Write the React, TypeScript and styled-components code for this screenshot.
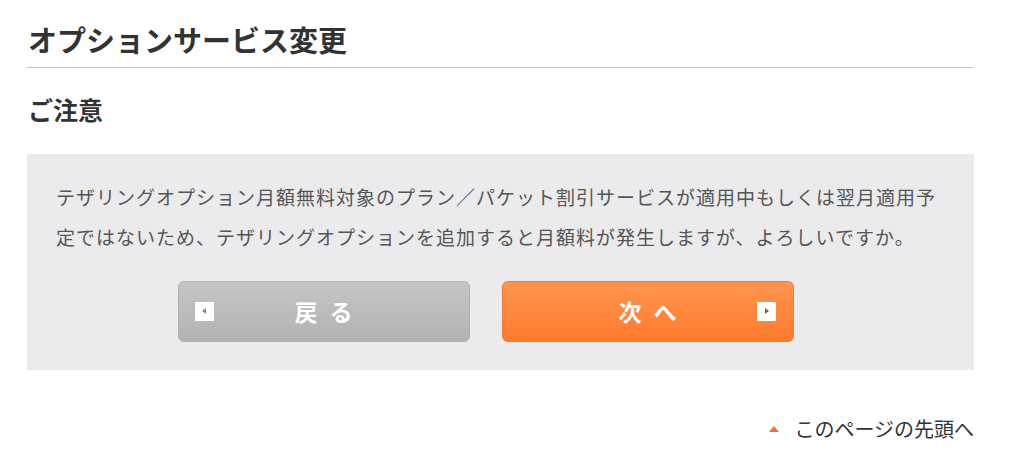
import React from "react";
import styled, { createGlobalStyle } from "styled-components";

const GlobalStyle = createGlobalStyle`
  html, body {
    margin: 0;
    padding: 0;
    background: #fff;
  }
  body {
    font-family: "Noto Sans CJK JP", "Noto Sans", sans-serif;
    color: #333;
  }
`;

const App: React.FC = () => {
  return (
    <>
      <GlobalStyle />
      <Page>
        <PageTitle>オプションサービス変更</PageTitle>
        <SectionTitle>ご注意</SectionTitle>
        <NoticeBox>
          <NoticeText>
            テザリングオプション月額無料対象のプラン／パケット割引サービスが適用中もしくは翌月適用予
            <br />
            定ではないため、テザリングオプションを追加すると月額料が発生しますが、よろしいですか。
          </NoticeText>
          <ButtonRow>
            <ActionButton $variant="back">
              <ArrowBox $dir="left" />
              <ButtonLabel>戻る</ButtonLabel>
            </ActionButton>
            <ActionButton $variant="next">
              <ButtonLabel>次へ</ButtonLabel>
              <ArrowBox $dir="right" />
            </ActionButton>
          </ButtonRow>
        </NoticeBox>
        <PageTopRow>
          <PageTopLink href="#">
            <UpMark />
            このページの先頭へ
          </PageTopLink>
        </PageTopRow>
      </Page>
    </>
  );
};

const Page = styled.div`
  width: 947px;
  margin-left: 27px;
`;

const PageTitle = styled.h1`
  margin: 0;
  padding: 19px 0 8px 1px;
  font-size: 29px;
  line-height: 40px;
  font-weight: 700;
  color: #333;
  border-bottom: 1px solid #bfbfbf;
`;

const SectionTitle = styled.h2`
  margin: 23px 0 27px 1px;
  font-size: 25px;
  line-height: 36px;
  font-weight: 700;
  color: #333;
`;

const NoticeBox = styled.div`
  background: #ebebed;
  padding: 23px 29px 28px;
`;

const NoticeText = styled.p`
  margin: 0;
  font-size: 19px;
  line-height: 40px;
  letter-spacing: 1px;
  color: #555;
  white-space: nowrap;
`;

const ButtonRow = styled.div`
  display: flex;
  justify-content: center;
  gap: 32px;
  margin-top: 24px;
  padding-right: 30px;
`;

const ActionButton = styled.button<{ $variant: "back" | "next" }>`
  position: relative;
  display: flex;
  align-items: center;
  justify-content: center;
  width: 292px;
  height: 61px;
  border-radius: 6px;
  border: 1px solid
    ${(p) => (p.$variant === "back" ? "#b0b0b0" : "#f07a36")};
  background: ${(p) =>
    p.$variant === "back"
      ? "linear-gradient(#c6c6c6, #b2b2b2)"
      : "linear-gradient(#ff9550, #ff7b2c)"};
  color: #fff;
  font-family: inherit;
  cursor: pointer;
  padding: 0;
`;

const ButtonLabel = styled.span`
  font-size: 23px;
  font-weight: 700;
  letter-spacing: 12px;
  padding-left: 12px;
  line-height: 1;
`;

const ArrowBox = styled.span<{ $dir: "left" | "right" }>`
  position: absolute;
  top: 50%;
  ${(p) => (p.$dir === "left" ? "left: 16px;" : "right: 17px;")}
  width: 19px;
  height: 19px;
  margin-top: -10px;
  background: #fff;
  &::after {
    content: "";
    position: absolute;
    top: 6px;
    left: 7px;
    border-top: 3.5px solid transparent;
    border-bottom: 3.5px solid transparent;
    ${(p) =>
      p.$dir === "left"
        ? "border-right: 4px solid #888;"
        : "border-left: 4px solid #8a5a3a; left: 8px;"}
  }
`;

const PageTopRow = styled.div`
  display: flex;
  justify-content: flex-end;
  margin-top: 44px;
`;

const PageTopLink = styled.a`
  display: flex;
  align-items: center;
  gap: 15px;
  font-size: 20px;
  line-height: 30px;
  color: #333;
  text-decoration: none;
`;

const UpMark = styled.span`
  width: 0;
  height: 0;
  border-left: 5px solid transparent;
  border-right: 5px solid transparent;
  border-bottom: 6px solid #e8743a;
`;

export default App;
